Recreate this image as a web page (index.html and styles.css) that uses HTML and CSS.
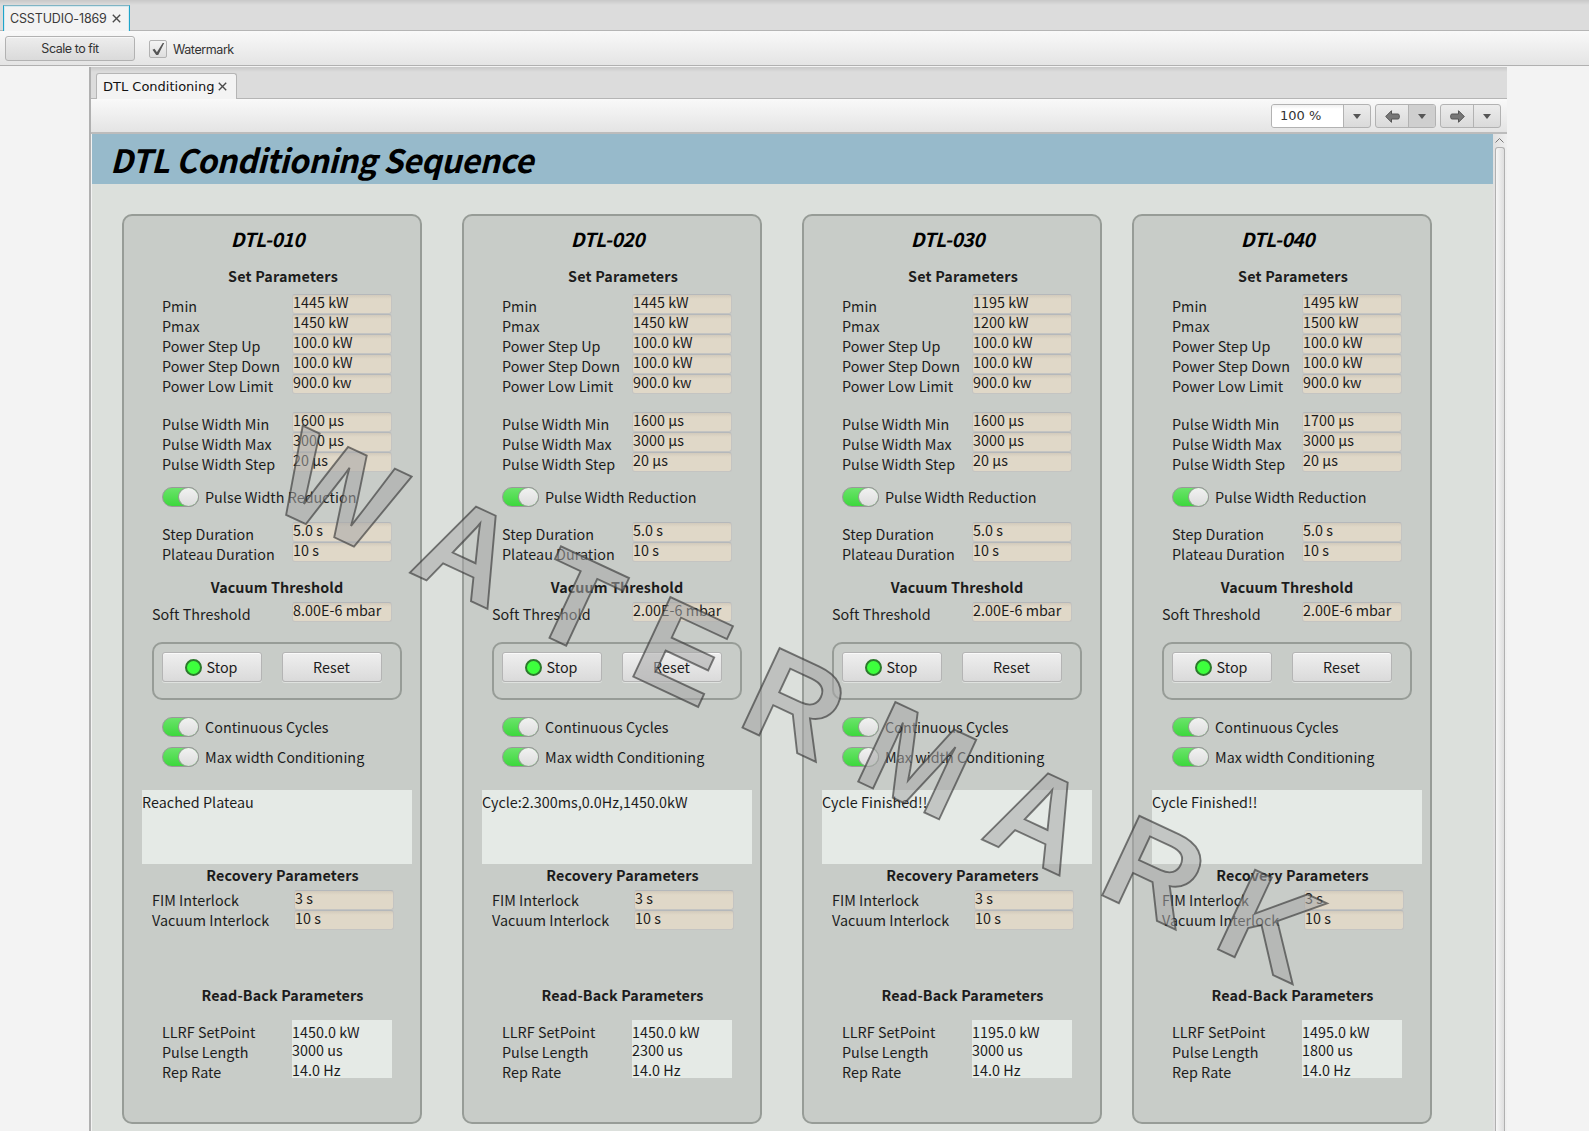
FILE: index.html
```
<!DOCTYPE html>
<html lang="en">
<head>
<meta charset="utf-8">
<title>DTL Conditioning</title>
<link rel="stylesheet" href="styles.css">
</head>
<body>
<header class="tabs tabs-main">
  <div class="tab tab-main">CSSTUDIO-1869<svg class="close" viewBox="0 0 8 8"><path d="M.7.7 7.3 7.3M7.3.7.7 7.3"/></svg></div>
</header>
<div class="toolbar toolbar-main">
  <button class="scale">Scale to fit</button>
  <span class="check"><svg viewBox="0 0 16 16"><path d="M2.500 8.800 4.500 7.800 6.900 11.200 12.700 2 14.200 2 8.200 14H6.200z"/></svg></span>
  <span class="check-label">Watermark</span>
</div>
<main class="view">
  <div class="tabs tabs-inner">
    <div class="tab tab-inner">DTL Conditioning<svg class="close" viewBox="0 0 8 8"><path d="M.7.7 7.3 7.3M7.3.7.7 7.3"/></svg></div>
  </div>
  <div class="toolbar toolbar-inner">
    <div class="split zoom"><span class="value">100 %</span><span class="drop"><i></i></span></div>
    <div class="split nav"><span class="arrow"><svg viewBox="0 0 15 13"><path d="M.7 6.500 6.500.7V4h6.300q1.500 0 1.500 1.500v2Q14.300 9 12.800 9H6.500v3.300z"/></svg></span><span class="drop pressed"><i></i></span></div>
    <div class="split nav"><span class="arrow"><svg viewBox="0 0 15 13"><path d="M14.300 6.500 8.500.7V4H2.200Q.7 4 .7 5.500v2Q.7 9 2.200 9h6.300v3.300z"/></svg></span><span class="drop"><i></i></span></div>
  </div>
  <div class="body">
    <div class="screen">
      <h1>DTL Conditioning Sequence</h1>
      <div class="cards" id="cards"></div>
    </div>
    <div class="scroll"><svg viewBox="0 0 14 13"><path d="M2.500 8.500 6.500 4.500 10.500 8.500"/></svg><div class="thumb"></div></div>
  </div>
</main>
<svg class="watermark" viewBox="0 0 1589 1131"><text transform="translate(265.600 505.300) rotate(25)">W A T E R M A R K</text></svg>
<script src="app.js"></script>
</body>
</html>
```
FILE: styles.css
```
* { box-sizing: border-box; }
body {
  margin: 0;
  width: 1589px;
  height: 1131px;
  overflow: hidden;
  background: #f3f3f3;
  color: #1c1c1c;
  font-family: "Noto Sans CJK SC", sans-serif;
  font-size: 14.33px;
  letter-spacing: 0.03px;
  display: flex;
  flex-direction: column;
}
button { font: inherit; color: inherit; letter-spacing: inherit; padding: 0; margin: 0; }
.tabs {
  display: flex;
  align-items: flex-end;
  flex: none;
  border-bottom: 1px solid #b5b5b5;
  background: linear-gradient(#c8c8c8, #dcdcdc 5px);
}
.tabs-main { height: 31px; padding-left: 3px; }
.tabs-inner { height: 32px; padding-left: 5px; }
.tab { display: flex; align-items: center; background: #f3f3f3; margin-bottom: -1px; white-space: nowrap; }
.tab-main {
  width: 127px;
  height: 26px;
  padding-left: 6px;
  border: 1px solid #1fa5cb;
  border-top-color: #7fb4c4;
  border-bottom: 0;
  box-shadow: inset 1px 1px #d5e9ef, inset -1px 0 #d5e9ef;
  font: 12.5px Inter, sans-serif;
  letter-spacing: -0.14px;
  color: #3a3a3a;
}
.tab-inner {
  width: 141px;
  height: 26px;
  padding-left: 6px;
  border: 1px solid #b5b5b5;
  border-bottom: 0;
  border-radius: 3px 3px 0 0;
  font: 13px "DejaVu Sans", sans-serif;
  letter-spacing: 0;
  color: #111;
}
.close { width: 9px; height: 9px; margin-left: 5px; stroke: #4a4a4a; stroke-width: 1.2; fill: none; }
.tab-inner .close { margin-left: 4px; }
.toolbar { display: flex; align-items: center; flex: none; background: linear-gradient(#f9f9f9, #e4e4e4); border-bottom: 1px solid #b0b0b0; }
.toolbar-main { height: 35px; padding-left: 5px; font: 12.5px Inter, sans-serif; letter-spacing: -0.42px; color: #333; }
.scale { width: 130px; height: 25px; border: 1px solid #b2b2b2; border-radius: 3px; background: linear-gradient(#ededed, #dadada); box-shadow: inset 0 1px #f8f8f8; letter-spacing: -0.5px; word-spacing: 0.2px; }
.check { width: 18px; height: 18px; margin: 1px 0 0 14px; border: 1px solid #b2b2b2; border-radius: 2px; background: linear-gradient(#f4f4f4, #dedede); display: flex; }
.check svg { width: 16px; height: 16px; fill: #555; }
.check-label { margin: 2px 0 0 6px; }
.view { width: 1418px; margin: 1px 0 0 89px; border-left: 2px solid #b0b0b0; flex: 1; display: flex; flex-direction: column; min-height: 0; }
.toolbar-inner { height: 35px; justify-content: flex-end; gap: 4px; padding: 1px 6px 0 0; border-bottom-width: 2px; border-bottom-color: #bcbcbc; }
.split { display: flex; height: 24px; border: 1px solid #b2b2b2; border-radius: 3px; background: linear-gradient(#ececec, #dadada); overflow: hidden; }
.zoom { width: 100px; }
.nav { width: 61px; }
.value { flex: 1; padding-left: 8px; line-height: 22px; font-family: "DejaVu Sans", sans-serif; font-size: 13px; letter-spacing: 0; background: linear-gradient(#f0f0f0, #fff 4px); color: #333; }
.arrow { flex: 1; display: flex; align-items: center; justify-content: center; }
.arrow svg { width: 15px; height: 13px; fill: #777; stroke: #555; stroke-width: 1; }
.drop { width: 27px; border-left: 1px solid #b2b2b2; display: flex; align-items: center; justify-content: center; }
.drop i { border: 4.5px solid transparent; border-top: 5px solid #555; border-bottom: 0; }
.pressed { background: #cfcfcf; }
.body { flex: 1; display: flex; min-height: 0; padding-left: 1px; }
.screen { width: 1401px; background: #dce0dc; overflow: hidden; }
h1 { margin: 0; height: 50px; line-height: 50px; padding-left: 18px; background: #97bacb; color: #000; font-size: 32.2px; letter-spacing: -0.5px; font-style: italic; font-weight: 700; white-space: nowrap; }
.cards { display: flex; padding: 30px 0 0 30px; gap: 40px; }
.card { width: 300px; height: 910px; flex: none; border: 2px solid #979c97; border-radius: 10px; background: #c8ccc8; padding: 0 18px; white-space: nowrap; }
.card:last-child { margin-left: -10px; }
h2, h3 { margin: 0; text-align: center; font-weight: 700; }
h2 { height: 49px; line-height: 46px; font-size: 19.3px; letter-spacing: -0.45px; font-style: italic; color: #000; padding-right: 9px; }
h3 { height: 20px; line-height: 20px; font-size: 14.33px; letter-spacing: 0.18px; }
.set { margin-top: 1px; padding-left: 22px; margin-bottom: 8px; }
.vacuum { margin-top: 15px; padding-left: 10px; margin-bottom: 5px; letter-spacing: 0.08px; }
.recovery { padding-left: 21px; margin: 1px 0 5px; }
.readback { padding-left: 21px; margin: 55px 0 15px; letter-spacing: 0.13px; }
.row { display: flex; height: 20px; padding-left: 20px; line-height: 20px; }
.row.wide { padding-left: 10px; }
.row .label { width: 130px; padding-top: 2px; }
.row.wide .label { width: 140px; }
.row.limits .label { width: 142px; padding-top: 0; }
.field { width: 100px; height: 20px; line-height: 14px; border: 1px solid #c4c4c2; border-top-color: #b5b8bb; border-radius: 3px; background: linear-gradient(#d2cabc, #e0d8c8 4px); }
.gap { height: 18px; }
.switch { display: flex; align-items: center; height: 30px; padding-left: 20px; }
.switch-label { line-height: 20px; }
.track { width: 37px; height: 20px; border: 1px solid #999; border-radius: 10px; background: linear-gradient(#6ae46a, #3dd83d); display: flex; justify-content: flex-end; margin-right: 6px; }
.knob { width: 19px; height: 18px; border-radius: 50%; background: linear-gradient(#f2f2f2, #dcdcdc); box-shadow: 0 0 0 1px #999; }
.reduction { margin: 10px 0; }
.buttons { display: flex; gap: 20px; width: 250px; height: 58px; margin: 20px 0 12px 10px; padding: 8px; border: 2px solid #979c97; border-radius: 10px; }
.buttons button { width: 100px; height: 30px; padding: 0 1px 0 0; border: 1px solid #b4b4b4; border-radius: 3px; background: linear-gradient(#efefef, #dadada); box-shadow: inset 0 1px #fafafa, 0 1px #dfe2df; display: flex; align-items: center; justify-content: center; gap: 4px; line-height: 20px; }
.buttons .led { width: 17px; height: 17px; margin-top: 1px; border-radius: 50%; border: 2px solid #2d792d; background: #3dff3d; }
.message { width: 270px; height: 74px; margin-top: 18px; background: #e5eae6; line-height: 24px; }
.read { width: 100px; height: 20px; background: #e5eae6; line-height: 24px; }
.read.mid { line-height: 20px; }
.read.last { height: 18px; line-height: 20px; }
.scroll { width: 14px; background: linear-gradient(90deg, #e0e0e0, #f0f0f0); display: flex; flex-direction: column; }
.scroll svg { width: 14px; height: 13px; fill: none; stroke: #777; flex: none; }
.thumb { width: 10px; margin-left: 2px; flex: 1; border: 1px solid #b0b0b0; border-bottom: 0; border-radius: 3px 3px 0 0; background: linear-gradient(90deg, #f6f6f6, #dedede); }
.watermark { position: absolute; left: 0; top: 0; width: 1589px; height: 1131px; pointer-events: none; }
.watermark text { font: 700 127.65px "Liberation Sans", sans-serif; letter-spacing: 0; font-kerning: none; fill: rgba(167, 167, 167, .55); stroke: rgba(50, 50, 50, .62); stroke-width: 1.9px; }
```
FILE: app.js
```
const systems = [
  { name: "DTL-010", set: ["1445 kW", "1450 kW"], width: "1600 µs", soft: "8.00E-6 mbar", message: "Reached Plateau", read: ["1450.0 kW", "3000 us"] },
  { name: "DTL-020", set: ["1445 kW", "1450 kW"], width: "1600 µs", soft: "2.00E-6 mbar", message: "Cycle:2.300ms,0.0Hz,1450.0kW", read: ["1450.0 kW", "2300 us"] },
  { name: "DTL-030", set: ["1195 kW", "1200 kW"], width: "1600 µs", soft: "2.00E-6 mbar", message: "Cycle Finished!!", read: ["1195.0 kW", "3000 us"] },
  { name: "DTL-040", set: ["1495 kW", "1500 kW"], width: "1700 µs", soft: "2.00E-6 mbar", message: "Cycle Finished!!", read: ["1495.0 kW", "1800 us"] }
];
const row = (label, value, cls = "") =>
  `<div class="row ${cls}"><span class="label">${label}</span><div class="field">${value}</div></div>`;
const toggle = (label, cls = "") =>
  `<div class="switch ${cls}"><span class="track"><span class="knob"></span></span><span class="switch-label">${label}</span></div>`;
const read = (label, value, cls = "") =>
  `<div class="row"><span class="label">${label}</span><div class="read ${cls}">${value}</div></div>`;
document.getElementById("cards").innerHTML = systems.map(s => `
<section class="card">
  <h2>${s.name}</h2>
  <h3 class="set">Set Parameters</h3>
  ${row("Pmin", s.set[0])}${row("Pmax", s.set[1])}${row("Power Step Up", "100.0 kW")}${row("Power Step Down", "100.0 kW")}${row("Power Low Limit", "900.0 kw")}
  <div class="gap"></div>
  ${row("Pulse Width Min", s.width)}${row("Pulse Width Max", "3000 µs")}${row("Pulse Width Step", "20 µs")}
  ${toggle("Pulse Width Reduction", "reduction")}
  ${row("Step Duration", "5.0 s")}${row("Plateau Duration", "10 s")}
  <h3 class="vacuum">Vacuum Threshold</h3>
  ${row("Soft Threshold", s.soft, "wide")}
  <div class="buttons"><button><span class="led"></span><span>Stop</span></button><button><span>Reset</span></button></div>
  ${toggle("Continuous Cycles")}${toggle("Max width Conditioning")}
  <div class="message">${s.message}</div>
  <h3 class="recovery">Recovery Parameters</h3>
  ${row("FIM Interlock", "3 s", "wide limits")}${row("Vacuum Interlock", "10 s", "wide limits")}
  <h3 class="readback">Read-Back Parameters</h3>
  ${read("LLRF SetPoint", s.read[0])}${read("Pulse Length", s.read[1], "mid")}${read("Rep Rate", "14.0 Hz", "last")}
</section>`).join("");
```
